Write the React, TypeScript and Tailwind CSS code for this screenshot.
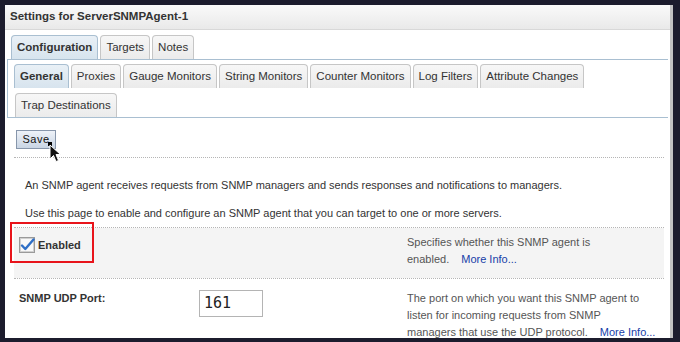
import React from "react";

const Tab = ({ label, active }: { label: string; active?: boolean }) => (
  <div
    className={
      "h-[24px] px-[5px] flex items-center rounded-t-[4px] border border-b-0 text-[11.5px] leading-none " +
      (active
        ? "bg-gradient-to-b from-[#e9f0f6] to-[#d7e4ee] border-[#a9bfd1] font-bold text-[#333]"
        : "bg-gradient-to-b from-[#f7f7f7] to-[#ebebeb] border-[#c6c6c6] text-[#333]")
    }
  >
    {label}
  </div>
);

export default function App() {
  return (
    <div
      className="w-[680px] h-[342px] bg-[#1c1c2d] pt-[5px] pl-[5px] pr-[7px] pb-[4px] overflow-hidden"
      style={{ fontFamily: '"Liberation Sans", Arial, sans-serif' }}
    >
      <div className="relative h-full bg-white border-r-[3px] border-[#c2c2c2] flex flex-col">
        {/* header */}
        <div className="h-[25px] shrink-0 bg-gradient-to-b from-[#fafafa] to-[#e9e9e9] border-b border-[#d8d8d8] flex items-center pl-[5px] text-[11.5px] font-bold text-[#333]">
          Settings for ServerSNMPAgent-1
        </div>

        {/* top tabs */}
        <div className="flex gap-[2px] pl-[6px] pt-[5px]">
          <Tab label="Configuration" active />
          <Tab label="Targets" />
          <Tab label="Notes" />
        </div>

        {/* sub tabs box */}
        <div className="mx-[2px] border-t border-b border-l border-[#a9bfd1] pl-[6px] pt-[4px] flex flex-col gap-[5px]">
          <div className="flex gap-[2px]">
            <Tab label="General" active />
            <Tab label="Proxies" />
            <Tab label="Gauge Monitors" />
            <Tab label="String Monitors" />
            <Tab label="Counter Monitors" />
            <Tab label="Log Filters" />
            <Tab label="Attribute Changes" />
          </div>
          <div className="flex gap-[2px] pl-[1px]">
            <Tab label="Trap Destinations" />
          </div>
        </div>

        {/* content */}
        <div className="pl-[9px] pr-[6px]">
          <div className="pt-[12px] pb-[8px] pl-[2px]">
            <button className="relative h-[19px] w-[40px] border border-[#8796ab] bg-gradient-to-b from-[#eef2f8] to-[#c9d5e4] text-[11px] tracking-[0.5px] text-[#111] flex items-center justify-center">
              Save
            </button>
          </div>
          <div className="border-t border-dotted border-[#b5b5b5]" />
          <div className="pl-[11px] pt-[20px] text-[11px] text-[#333] leading-[14px]">
            <p>An SNMP agent receives requests from SNMP managers and sends responses and notifications to managers.</p>
            <p className="mt-[14px]">Use this page to enable and configure an SNMP agent that you can target to one or more servers.</p>
          </div>
          <div className="mt-[7px] border-t border-dotted border-[#b5b5b5]" />

          {/* Enabled row */}
          <div className="h-[50px] bg-[#f4f4f4] flex">
            <div className="w-[393px] flex items-start pl-[5px] pt-[9px]">
              <svg width="16" height="16" viewBox="0 0 16 16" className="shrink-0">
                <rect x="0.5" y="0.5" width="15" height="15" fill="#eeeeee" stroke="#9a9a9a" />
                <rect x="1.5" y="1.5" width="13" height="13" fill="#f8f8f8" stroke="#d0d0d0" />
                <path d="M3 8.5 L6.3 12 L14.5 2.5" fill="none" stroke="#2f6fc6" strokeWidth="2.4" strokeLinecap="round" strokeLinejoin="round" />
              </svg>
              <span className="ml-[3px] text-[11px] font-bold text-[#333] leading-[16px]">Enabled</span>
            </div>
            <div className="w-[255px] pt-[6px] text-[11px] leading-[17px] text-[#555]">
              <div>Specifies whether this SNMP agent is</div>
              <div className="whitespace-nowrap">
                enabled.<span className="ml-[12px] text-[#1740a8]">More Info...</span>
              </div>
            </div>
          </div>
          <div className="border-t border-dotted border-[#b5b5b5]" />

          {/* UDP port row */}
          <div className="flex pt-[11px]">
            <div className="w-[185px] pl-[5px] text-[11px] font-bold text-[#333] leading-[16px]">SNMP UDP Port:</div>
            <div className="w-[208px]">
              <div className="w-[64px] h-[27px] border border-[#b4b4b4] bg-white flex items-center pl-[4px] text-[15px] text-[#222]" style={{ fontFamily: '"DejaVu Sans Mono", monospace' }}>
                161
              </div>
            </div>
            <div className="w-[255px] text-[11px] leading-[17px] text-[#555] whitespace-nowrap">
              <div>The port on which you want this SNMP agent to</div>
              <div>listen for incoming requests from SNMP</div>
              <div>
                managers that use the UDP protocol.<span className="ml-[12px] text-[#1740a8]">More Info...</span>
              </div>
            </div>
          </div>
        </div>

        {/* red highlight box */}
        <div className="absolute left-[5px] top-[217px] w-[84px] h-[41px] border-2 border-[#e8141b]" />

        {/* mouse cursor */}
        <svg className="absolute left-[43px] top-[137px]" width="14" height="22" viewBox="0 0 14 22">
          <rect x="0" y="0" width="4" height="4" fill="#000" />
          <path d="M2 3 L2 17 L5.5 13.5 L8 19.5 L10.5 18.5 L8 12.5 L12.5 12.5 Z" fill="#111" stroke="#fff" strokeWidth="1" />
        </svg>
      </div>
    </div>
  );
}
